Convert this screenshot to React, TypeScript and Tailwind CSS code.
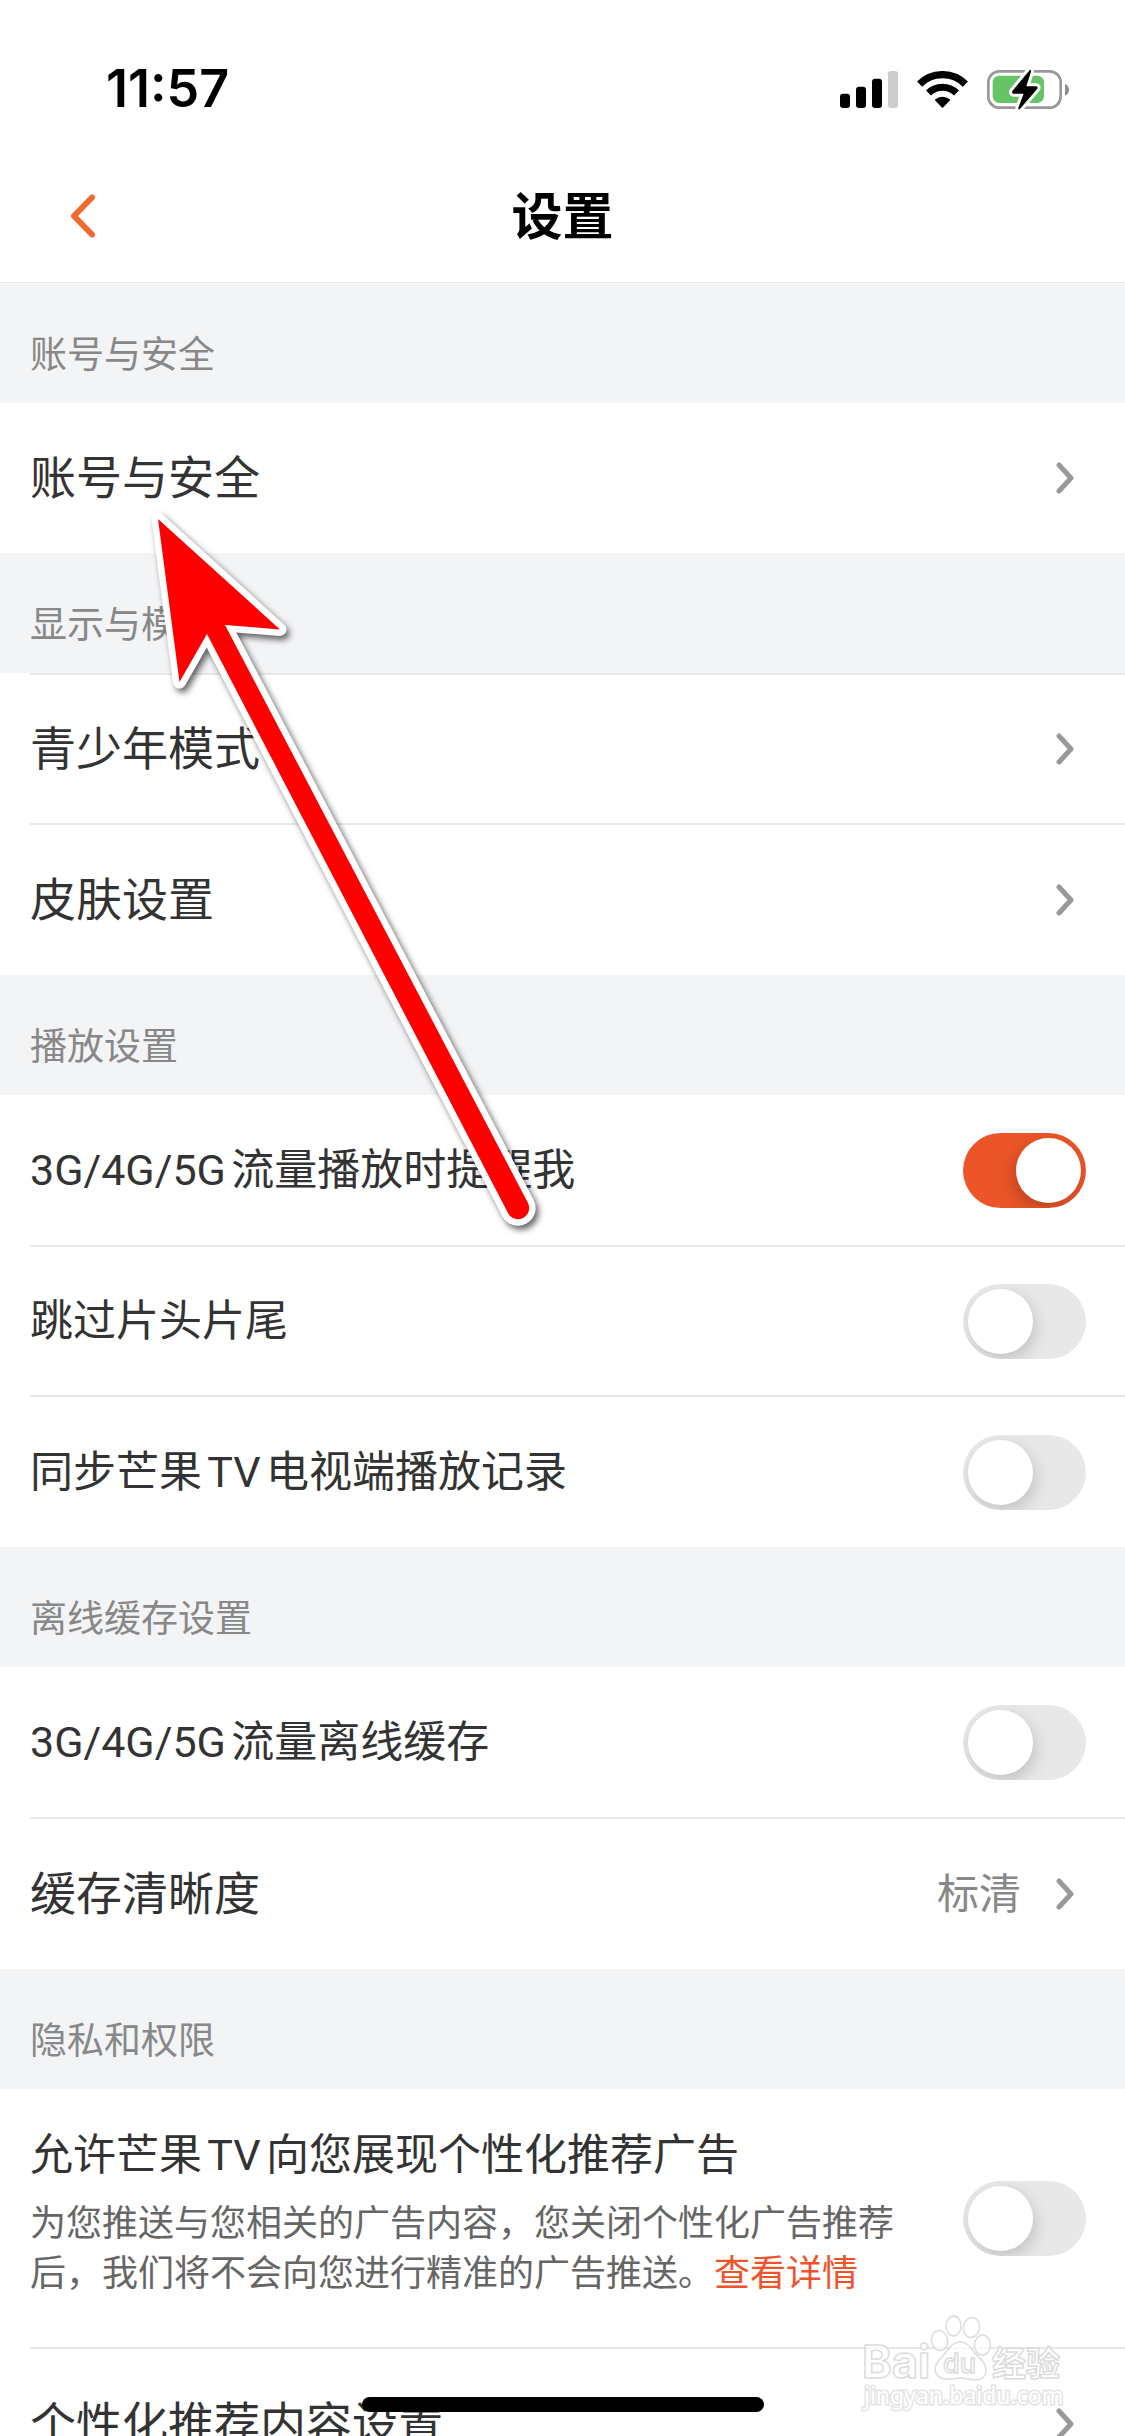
import { useId, useState } from "react";

type RowItem = {
  label: string;
  kind: "link" | "switch";
  value?: string;
  on?: boolean;
  note?: string;
  noteLink?: string;
};

type Section = {
  title: string;
  topLine?: boolean;
  rows: RowItem[];
};

const sections: Section[] = [
  {
    title: "账号与安全",
    rows: [{ label: "账号与安全", kind: "link" }],
  },
  {
    title: "显示与模式",
    topLine: true,
    rows: [
      { label: "青少年模式", kind: "link" },
      { label: "皮肤设置", kind: "link" },
    ],
  },
  {
    title: "播放设置",
    rows: [
      { label: "3G/4G/5G流量播放时提醒我", kind: "switch", on: true },
      { label: "跳过片头片尾", kind: "switch" },
      { label: "同步芒果TV电视端播放记录", kind: "switch" },
    ],
  },
  {
    title: "离线缓存设置",
    rows: [
      { label: "3G/4G/5G流量离线缓存", kind: "switch" },
      { label: "缓存清晰度", kind: "link", value: "标清" },
    ],
  },
  {
    title: "隐私和权限",
    rows: [
      {
        label: "允许芒果TV向您展现个性化推荐广告",
        kind: "switch",
        note: "为您推送与您相关的广告内容，您关闭个性化广告推荐后，我们将不会向您进行精准的广告推送。",
        noteLink: "查看详情",
      },
      { label: "个性化推荐内容设置", kind: "link" },
    ],
  },
];

function SignalIcon() {
  return (
    <svg viewBox="120 90 174 111" className="w-[58px] h-[37px]" aria-hidden="true">
      <rect x="120" y="158" width="30" height="43" rx="9" />
      <rect x="168" y="137" width="30" height="64" rx="9" />
      <rect x="216" y="113" width="30" height="88" rx="9" />
      <rect x="264" y="90" width="30" height="111" rx="9" fill="#cccccc" />
    </svg>
  );
}

function WifiIcon() {
  return (
    <svg viewBox="352 90 152 111" className="w-[51px] h-[37px]" aria-hidden="true">
      <path d="M359.4 129.4A97 97 0 0 1 496.6 129.4" fill="none" stroke="#000" strokeWidth="22" />
      <path d="M386 156A59.5 59.5 0 0 1 470 156" fill="none" stroke="#000" strokeWidth="21" />
      <path
        d="M428 198L408 177A31 31 0 0 1 448 177Z"
        stroke="#000"
        strokeWidth="5"
        strokeLinejoin="round"
      />
    </svg>
  );
}

function BatteryIcon() {
  return (
    <svg viewBox="561 84 246 123" className="w-[82px] h-[41px]" aria-hidden="true">
      <rect x="565" y="91" width="217" height="109" rx="33" fill="none" stroke="#999999" strokeWidth="8" />
      <path d="M795 128Q807 134 807 146Q807 158 795 164Z" fill="#8e8e8e" />
      <rect x="578" y="104" width="154" height="82" rx="20" fill="#65c466" />
      <path
        d="M690 86L637 150Q634 157 641 158L671 158L655 200Q654 206 659 205L712 143Q715 137 708 136L679 136L693 92Q694 86 690 86Z"
        fill="#000"
        stroke="#fff"
        strokeWidth="18"
        strokeLinejoin="round"
        paintOrder="stroke"
      />
    </svg>
  );
}

function Chevron() {
  return (
    <svg viewBox="0 0 18 32" className="w-[18px] h-8 shrink-0" aria-hidden="true">
      <path
        d="M3 3L15 16L3 29"
        fill="none"
        stroke="#999999"
        strokeWidth="5"
        strokeLinecap="round"
        strokeLinejoin="round"
      />
    </svg>
  );
}

function Switch({ id, defaultOn }: { id: string; defaultOn?: boolean }) {
  const [on, setOn] = useState(!!defaultOn);

  return (
    <input
      id={id}
      type="checkbox"
      role="switch"
      checked={on}
      onChange={() => setOn(o => !o)}
      className="appearance-none shrink-0 w-[123px] h-[75px] p-[5px] rounded-full overflow-hidden cursor-pointer bg-[#e8e8e8] checked:bg-[#ec5528] before:block before:size-[65px] before:rounded-full before:bg-white before:shadow-[3px_6px_16px_rgba(0,0,0,0.16)] checked:before:ml-12 checked:before:shadow-[-3px_6px_16px_rgba(0,0,0,0.2)]"
    />
  );
}

function Row({ item, line }: { item: RowItem; line: boolean }) {
  const id = useId();
  const border = line ? "border-t-2 border-[#e8e8e8]" : "";

  if (item.kind === "link") {
    return (
      <li className="h-[150px] last:h-[152px] only:h-[150px] pl-[30px]">
        <button className={`w-full h-full flex items-center pr-[51px] text-left ${border}`}>
          <span className="flex-1 text-[46px]">{item.label}</span>
          {item.value && (
            <span className="mr-[35px] text-[42px] text-[#888888]">{item.value}</span>
          )}
          <Chevron />
        </button>
      </li>
    );
  }

  if (item.note) {
    return (
      <li className="pl-[30px]">
        <div className={`flex items-center gap-[60px] pr-[39px] ${border}`}>
          <div className="flex-1 pt-9 pb-12">
            <label htmlFor={id} className="block text-[43px] leading-[60px]">
              {item.label}
            </label>
            <p className="mt-[14px] text-[36px] leading-[50px] text-[#666666]">
              {item.note}
              <a href="#" className="text-[#f0532a]">
                {item.noteLink}
              </a>
            </p>
          </div>
          <Switch id={id} defaultOn={item.on} />
        </div>
      </li>
    );
  }

  return (
    <li className="h-[150px] last:h-[152px] only:h-[150px] pl-[30px]">
      <div className={`h-full flex items-center pr-[39px] ${border}`}>
        <label htmlFor={id} className="flex-1 text-[43px]">
          {item.label}
        </label>
        <Switch id={id} defaultOn={item.on} />
      </div>
    </li>
  );
}

function PointerArrow() {
  return (
    <svg
      viewBox="140 500 420 740"
      className="absolute left-[140px] top-[500px] w-[420px] h-[740px] pointer-events-none drop-shadow-[3px_4px_3px_rgba(0,0,0,0.6)]"
      aria-hidden="true"
    >
      <path
        d="M158 519L280 629.500L225 625L528 1203A11 11 0 0 1 508 1213L207 634L179.500 682Z"
        fill="#ff0000"
        stroke="#fff"
        strokeWidth="13"
        strokeLinejoin="round"
        paintOrder="stroke"
      />
    </svg>
  );
}

function Watermark() {
  return (
    <svg
      viewBox="0 0 240 136"
      className="absolute right-[45px] bottom-0 w-[240px] h-[136px] pointer-events-none"
      fill="#ffffff"
      fillOpacity="0.7"
      stroke="#dcdcdc"
      strokeWidth="1.500"
      aria-hidden="true"
    >
      <text x="22" y="78" fontFamily="Inter, sans-serif" fontWeight="700" fontSize="45">
        Bai
      </text>
      <ellipse cx="99.500" cy="40.500" rx="8" ry="10" transform="rotate(-12 99.500 40.500)" />
      <ellipse cx="113.500" cy="26" rx="7.500" ry="10" />
      <ellipse cx="131.500" cy="27.500" rx="8" ry="10" transform="rotate(12 131.500 27.500)" />
      <ellipse cx="142.500" cy="45" rx="8" ry="10" />
      <path d="M120 42C127 42 130 47 134 52C139 58 146 62 146 70C146 76 142 80 135 80C130 80 126 78 120 78C114 78 110 80 106 79C99 79 95 74 95 69C95 62 102 58 106 52C110 47 113 42 120 42Z" />
      <text x="103" y="73" fontFamily="Inter, sans-serif" fontWeight="500" fontSize="27">
        du
      </text>
      <text x="152" y="76" fontFamily='"Noto Sans CJK SC", sans-serif' fontWeight="700" fontSize="34">
        经验
      </text>
      <text
        x="24"
        y="104"
        fontFamily='"Noto Sans", sans-serif'
        fontSize="23"
        fill="#ffffff"
        fillOpacity="1"
        stroke="#e4e4e4"
        strokeWidth="3"
        paintOrder="stroke"
      >
        jingyan.baidu.com
      </text>
    </svg>
  );
}

export default function App() {
  return (
    <div className="relative h-screen overflow-hidden bg-white text-[#333333] font-[Roboto,'Noto_Sans_CJK_SC',sans-serif] [text-autospace:normal]">
      <div className="h-[150px] pt-7 pl-[106px] pr-14 flex items-center justify-between text-black">
        <span className="font-[Inter,sans-serif] font-semibold text-[52px]">11:57</span>
        <div className="flex items-center gap-[19px]">
          <SignalIcon />
          <WifiIcon />
          <BatteryIcon />
        </div>
      </div>

      <header className="h-[133px] grid grid-cols-[1fr_auto_1fr] items-center border-b border-[#e8e8e8]">
        <button aria-label="返回" className="justify-self-start ml-[70px]">
          <svg viewBox="0 0 26 44" className="w-[26px] h-11" aria-hidden="true">
            <path
              d="M22 3.500L4 22L22 40.500"
              fill="none"
              stroke="#f06b2d"
              strokeWidth="6"
              strokeLinecap="round"
              strokeLinejoin="round"
            />
          </svg>
        </button>
        <h1 className="pt-1 text-[51px] font-bold text-black">设置</h1>
      </header>

      <main>
        {sections.map(section => (
          <section key={section.title}>
            <h2 className="h-[120px] pt-[26px] pl-[30px] flex items-center bg-[#f3f4f6] text-[37px] text-[#888888]">
              {section.title}
            </h2>
            <ul>
              {section.rows.map((item, i) => (
                <Row key={item.label} item={item} line={i > 0 || !!section.topLine} />
              ))}
            </ul>
          </section>
        ))}
      </main>

      <PointerArrow />
      <Watermark />
      {/* home indicator */}
      <div className="absolute bottom-6 left-1/2 -translate-x-1/2 w-[402px] h-[15px] rounded-full bg-black" />
    </div>
  );
}
